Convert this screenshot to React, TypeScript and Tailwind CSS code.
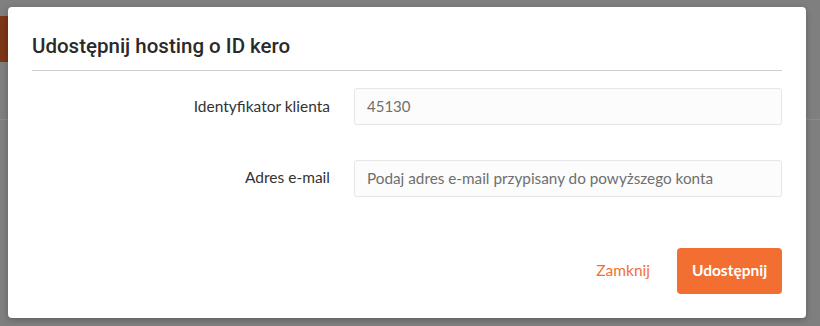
import React from "react";

export default function App() {
  return (
    <div className="relative w-[820px] h-[326px] overflow-hidden bg-[#7f7f7f]" style={{ fontFamily: "Lato, 'Noto Sans', sans-serif" }}>
      {/* background page elements under overlay */}
      <div className="absolute left-0 top-[16px] w-[12px] h-[46px] bg-[#7c3716]" />
      <div className="absolute left-0 right-0 top-[119px] h-px bg-[#8c8c8c]" />
      <div className="absolute left-[8px] top-[7px] w-[798px] h-[311px] bg-white rounded-[4px] shadow-[0_2px_6px_rgba(0,0,0,0.25)] flex flex-col px-[24px]">
        <div className="h-[64px] flex items-end pb-[11px] border-b border-[#cfcfcf]">
          <h1 className="text-[20.5px] font-medium text-[#2a2a2a] leading-[26px]" style={{ fontFamily: "Roboto, 'Noto Sans', sans-serif" }}>Udostępnij hosting o ID kero</h1>
        </div>
        <div className="flex items-center mt-[17px]">
          <label className="w-[322px] text-right pr-[24px] text-[15.5px] text-[#333]">Identyfikator klienta</label>
          <div className="flex-1 h-[37px] border border-[#e6e6e6] bg-[#fcfcfc] rounded-[3px] flex items-center px-[12px] text-[15px] text-[#6f6f6f]">45130</div>
        </div>
        <div className="flex items-center mt-[35px]">
          <label className="w-[322px] text-right pr-[24px] text-[15.5px] text-[#333] -mt-[2px]">Adres e-mail</label>
          <div className="flex-1 h-[37px] border border-[#e6e6e6] bg-[#fcfcfc] rounded-[3px] flex items-center px-[12px] text-[15.3px] text-[#6f6f6f]">Podaj adres e-mail przypisany do powyższego konta</div>
        </div>
        <div className="flex justify-end items-center mt-[51px]">
          <button className="text-[#f36f31] text-[15.5px] mr-[27px]">Zamknij</button>
          <button className="w-[105px] h-[46px] bg-[#f36f31] rounded-[4px] text-white text-[15.5px] font-bold">Udostępnij</button>
        </div>
      </div>
    </div>
  );
}
